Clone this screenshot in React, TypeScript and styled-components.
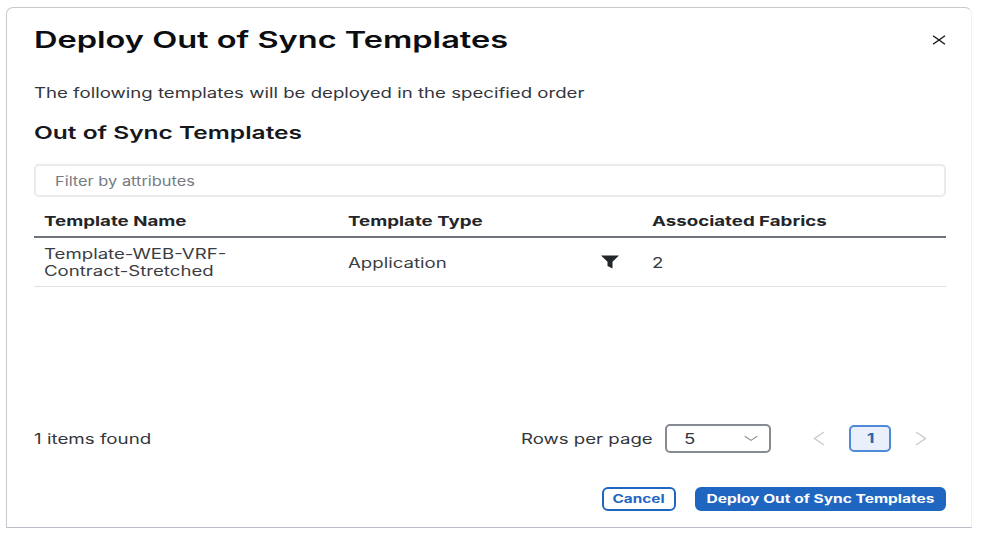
import React from "react";
import styled, { createGlobalStyle } from "styled-components";

const Global = createGlobalStyle`
  html, body { margin: 0; padding: 0; background: #fff; }
  body { font-family: Inter, "Liberation Sans", sans-serif; color: #1f2329; }
  * { box-sizing: border-box; }
`;

const Page = styled.div`
  width: 999px;
  height: 536px;
  padding: 7px 27px 7px 6px;
  background: #fff;
`;

const Dialog = styled.div`
  width: 966px;
  height: 521px;
  border: 1.5px solid #c6c9ce;
  border-right-color: #f1f2f3;
  border-bottom-color: #b9bdc6;
  border-radius: 7px 7px 0 0;
  background: #fff;
  padding: 0 25px 0 27px;
  display: flex;
  flex-direction: column;
`;

/* The reference is a horizontally stretched capture, so its text is widened the same way. */
const Wide = styled.span`
  display: inline-block;
  white-space: ${p => (p.$wrap ? "normal" : "nowrap")};
  transform: scaleX(${p => p.$x});
  transform-origin: ${p => (p.$center ? "center" : "left")};
`;

const Header = styled.header`
  height: 60px;
  padding-top: 4px;
  display: flex;
  align-items: center;
  justify-content: space-between;
`;

const Title = styled.h1`
  margin: 0;
  font-size: 23px;
  font-weight: 600;
  color: #0b0d10;
`;

const Close = styled.button`
  border: 0;
  background: none;
  padding: 0;
  width: 14px;
  height: 10px;
  display: flex;
  margin-top: -1px;
  svg { display: block; }
`;

const Description = styled.p`
  margin: 15px 0 0;
  font-size: 14px;
  line-height: 20px;
  color: #33363b;
`;

const Subtitle = styled.h2`
  margin: 18px 0 0;
  font-size: 17.5px;
  line-height: 24px;
  font-weight: 600;
  color: #16181c;
`;

const Filter = styled.div`
  margin-top: 19px;
  height: 33px;
  border: 2px solid #e9ebed;
  border-radius: 5px;
  padding-left: 19px;
  display: flex;
  align-items: center;
  font-size: 13px;
  color: #767b82;
`;

const Grid = styled.div`
  display: grid;
  grid-template-columns: 304px 304px 1fr;
  padding-left: 10px;
`;

const HeadRow = styled(Grid)`
  height: 41px;
  align-items: center;
  padding-top: 9px;
  border-bottom: 2px solid #6f747c;
  font-size: 13.5px;
  font-weight: 700;
  color: #22252a;
`;

const BodyRow = styled(Grid)`
  height: 49px;
  align-items: center;
  border-bottom: 1.5px solid #dfe1e4;
  font-size: 14px;
  color: #3a3d42;
`;

const NameCell = styled.div`
  line-height: 17px;
  width: 140px;
`;

const TypeCell = styled.div`
  display: flex;
  align-items: center;
  justify-content: space-between;
  padding-right: 32px;
`;

const Spacer = styled.div`
  flex: 1;
`;

const Pager = styled.div`
  display: flex;
  align-items: center;
  height: 30px;
  margin-bottom: 34px;
  font-size: 14px;
  color: #33363b;
`;

const Found = styled.span`
  flex: 1;
`;

const RowsLabel = styled.span`
  width: 130px;
`;

const SelectBox = styled.div`
  width: 106px;
  height: 29px;
  margin-left: 14px;
  border: 2px solid #868b92;
  border-radius: 5px;
  display: flex;
  align-items: center;
  justify-content: space-between;
  padding: 0 11px 0 17px;
`;

const Arrow = styled.span`
  display: flex;
  margin-left: ${p => p.$left}px;
  margin-right: ${p => p.$right}px;
`;

const PageNumber = styled.div`
  width: 42px;
  height: 27px;
  border: 2px solid #4f8ad8;
  border-radius: 5px;
  background: #e9f0fb;
  color: #2b63ad;
  font-size: 13px;
  font-weight: 700;
  display: flex;
  align-items: center;
  justify-content: center;
`;

const Actions = styled.div`
  display: flex;
  justify-content: flex-end;
  gap: 19px;
  margin-bottom: 16px;
`;

const Button = styled.button`
  height: 24px;
  border-radius: 6px;
  border: 2px solid #1f66c1;
  padding: 0;
  width: ${p => p.$width}px;
  background: ${p => (p.$primary ? "#1f66c1" : "#fff")};
  color: ${p => (p.$primary ? "#fff" : "#1f66c1")};
  font-family: Inter, "Liberation Sans", sans-serif;
  font-size: 11.5px;
  font-weight: 700;
`;

export default function App() {
  return (
    <Page>
      <Global />
      <Dialog>
        <Header>
          <Title><Wide $x={1.415}>Deploy Out of Sync Templates</Wide></Title>
          <Close aria-label="Close">
            <svg width="14" height="10" viewBox="0 0 14 10" fill="none" stroke="#15171a" strokeWidth="1.4">
              <path d="M1 .7 13 9.3M13 .7 1 9.3" />
            </svg>
          </Close>
        </Header>
        <Description><Wide $x={1.33}>The following templates will be deployed in the specified order</Wide></Description>
        <Subtitle><Wide $x={1.4}>Out of Sync Templates</Wide></Subtitle>
        <Filter><Wide $x={1.26}>Filter by attributes</Wide></Filter>
        <HeadRow>
          <div><Wide $x={1.385}>Template Name</Wide></div>
          <div><Wide $x={1.385}>Template Type</Wide></div>
          <div><Wide $x={1.385}>Associated Fabrics</Wide></div>
        </HeadRow>
        <BodyRow>
          <NameCell><Wide $wrap $x={1.33}>Template-WEB-VRF-Contract-Stretched</Wide></NameCell>
          <TypeCell>
            <Wide $x={1.33}>Application</Wide>
            <svg width="20" height="14" viewBox="0 0 20 14" fill="#23262b">
              <path d="M1 0.5h18l-6.5 6.2v6.8l-5-2.6V6.7z" />
            </svg>
          </TypeCell>
          <div><Wide $x={1.33}>2</Wide></div>
        </BodyRow>
        <Spacer />
        <Pager>
          <Found><Wide $x={1.34}>1 items found</Wide></Found>
          <RowsLabel><Wide $x={1.33}>Rows per page</Wide></RowsLabel>
          <SelectBox>
            <Wide $x={1.33}>5</Wide>
            <svg width="14" height="7" viewBox="0 0 14 7" fill="none" stroke="#8b9096" strokeWidth="1.2">
              <path d="M.8 1.2 7 5.4 13.2 1.2" />
            </svg>
          </SelectBox>
          <Arrow $left={42} $right={24}>
            <svg width="12" height="15" viewBox="0 0 12 15" fill="none" stroke="#c9ccd1" strokeWidth="1.5">
              <path d="M11 1 1.5 7.5 11 14" />
            </svg>
          </Arrow>
          <PageNumber><Wide $x={1.33}>1</Wide></PageNumber>
          <Arrow $left={24} $right={19}>
            <svg width="12" height="15" viewBox="0 0 12 15" fill="none" stroke="#c9ccd1" strokeWidth="1.5">
              <path d="M1 1 10.5 7.5 1 14" />
            </svg>
          </Arrow>
        </Pager>
        <Actions>
          <Button $width={74}><Wide $center $x={1.33}>Cancel</Wide></Button>
          <Button $primary $width={251}><Wide $center $x={1.35}>Deploy Out of Sync Templates</Wide></Button>
        </Actions>
      </Dialog>
    </Page>
  );
}
